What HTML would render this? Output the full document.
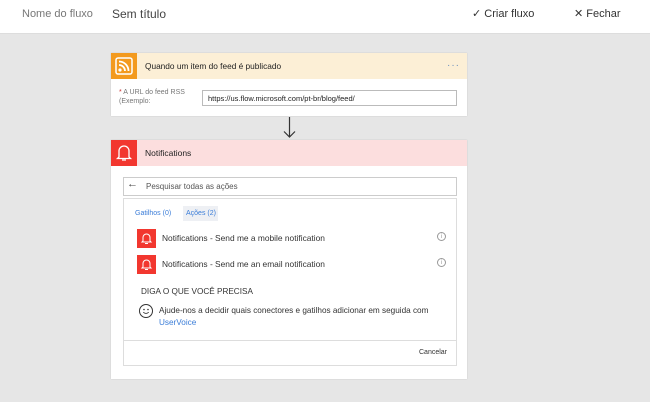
<!DOCTYPE html>
<html><head><meta charset="utf-8"><style>
*{box-sizing:border-box;margin:0;padding:0}
body{width:650px;height:402px;background:#e6e6e6;font-family:"Liberation Sans",sans-serif;position:relative;overflow:hidden;color:#333}
.top{position:absolute;left:0;top:0;width:650px;height:34px;background:#fff;border-bottom:1px solid #ddd}
.abs{position:absolute;white-space:nowrap}
.card{position:absolute;left:111px;width:356px;background:#fff;box-shadow:0 0 1px rgba(0,0,0,.2)}
.hd{height:26px;position:relative}
.ic{position:absolute;left:0;top:0;width:26px;height:26px}
</style></head><body>
<div class="top">
<div class="abs" style="left:22px;top:8px;font-size:11px;color:#777">Nome do fluxo</div>
<div class="abs" style="left:112px;top:7px;font-size:12px;color:#444">Sem título</div>
<div class="abs" style="left:472px;top:7px;font-size:11px;color:#333">✓ Criar fluxo</div>
<div class="abs" style="left:574px;top:7px;font-size:11px;color:#333">✕ Fechar</div>
</div>
<div class="card" style="top:53px;height:63px">
<div class="hd" style="background:#fcefd6">
<div class="ic" style="background:#f39a1e"><svg width="26" height="26"><rect x="5" y="5" width="16" height="16" rx="2" fill="none" stroke="#fff" stroke-width="1.5"/><circle cx="9" cy="17" r="1.6" fill="#fff"/><path d="M8 12a6 6 0 0 1 6 6M8 8.5a9.5 9.5 0 0 1 9.5 9.5" fill="none" stroke="#fff" stroke-width="1.8"/></svg></div>
<div class="abs" style="left:34px;top:8px;font-size:8.3px;color:#222">Quando um item do feed é publicado</div>
<div class="abs" style="left:336px;top:7px;font-size:10px;color:#6a8fbd;letter-spacing:1px">···</div>
</div>
<div class="abs" style="left:8px;top:35px;font-size:7px;color:#777;line-height:9px"><span style="color:#c33">*</span> A URL do feed RSS<br>(Exemplo:</div>
<div class="abs" style="left:91px;top:37px;width:255px;height:16px;border:1px solid #bbb;font-size:7.5px;padding:3px 5px;color:#222">https://us.flow.microsoft.com/pt-br/blog/feed/</div>
</div>
<svg class="abs" style="left:283px;top:117px" width="13" height="22"><path d="M6.5 0V20M1 14.5l5.5 5.5 5.5-5.5" fill="none" stroke="#333" stroke-width="1.2"/></svg>
<div class="card" style="top:140px;height:239px">
<div class="hd" style="background:#fcdede">
<div class="ic" style="background:#f2372f"><svg width="26" height="26"><path d="M8 17V11a5 5 0 0 1 10 0v6l1.5 1.5h-13zM11 20h4" fill="none" stroke="#fff" stroke-width="1.3"/></svg></div>
<div class="abs" style="left:34px;top:8px;font-size:8.5px;color:#222">Notifications</div>
</div>
<div class="abs" style="left:12px;top:37px;width:334px;height:19px;border:1px solid #ccc"></div>
<div class="abs" style="left:16px;top:38px;font-size:11px;color:#444">←</div>
<div class="abs" style="left:35px;top:42px;font-size:8px;color:#555">Pesquisar todas as ações</div>
<div class="abs" style="left:12px;top:58px;width:334px;height:168px;border:1px solid #ddd"></div>
<div class="abs" style="left:24px;top:70px;font-size:7px;color:#3b7dd8">Gatilhos (0)</div>
<div class="abs" style="left:72px;top:66px;width:35px;height:15px;background:#eef0f4"></div>
<div class="abs" style="left:75px;top:70px;font-size:7px;color:#3b7dd8">Ações (2)</div>
<div class="abs" style="left:26px;top:89px;width:19px;height:19px;background:#f2372f"><svg width="19" height="19"><path d="M6 12V8.5a3.5 3.5 0 0 1 7 0V12l1 1H5zM8 14.5h3" fill="none" stroke="#fff" stroke-width="1"/></svg></div>
<div class="abs" style="left:51px;top:93px;font-size:8.4px;color:#333">Notifications - Send me a mobile notification</div>
<div class="abs" style="left:326px;top:92px;width:9px;height:9px;border:1px solid #999;border-radius:50%;font-size:6px;text-align:center;line-height:8px;color:#999">i</div>
<div class="abs" style="left:26px;top:115px;width:19px;height:19px;background:#f2372f"><svg width="19" height="19"><path d="M6 12V8.5a3.5 3.5 0 0 1 7 0V12l1 1H5zM8 14.5h3" fill="none" stroke="#fff" stroke-width="1"/></svg></div>
<div class="abs" style="left:51px;top:119px;font-size:8.4px;color:#333">Notifications - Send me an email notification</div>
<div class="abs" style="left:326px;top:118px;width:9px;height:9px;border:1px solid #999;border-radius:50%;font-size:6px;text-align:center;line-height:8px;color:#999">i</div>
<div class="abs" style="left:30px;top:147px;font-size:8.2px;color:#333">DIGA O QUE VOCÊ PRECISA</div>
<div class="abs" style="left:28px;top:164px;width:14px;height:14px;border:1.3px solid #333;border-radius:50%"><svg width="12" height="12" style="position:absolute;left:0;top:0"><circle cx="4" cy="4.5" r=".8" fill="#333"/><circle cx="8" cy="4.5" r=".8" fill="#333"/><path d="M3.3 7.2q2.7 2.5 5.4 0" fill="none" stroke="#333" stroke-width=".9"/></svg></div>
<div class="abs" style="left:48px;top:166px;font-size:8.2px;color:#333">Ajude-nos a decidir quais conectores e gatilhos adicionar em seguida com</div>
<div class="abs" style="left:48px;top:178px;font-size:8.2px;color:#3b7dd8">UserVoice</div>
<div class="abs" style="left:12px;top:200px;width:334px;height:1px;background:#ddd"></div>
<div class="abs" style="left:308px;top:209px;font-size:7px;color:#333">Cancelar</div>
</div>
</body></html>
